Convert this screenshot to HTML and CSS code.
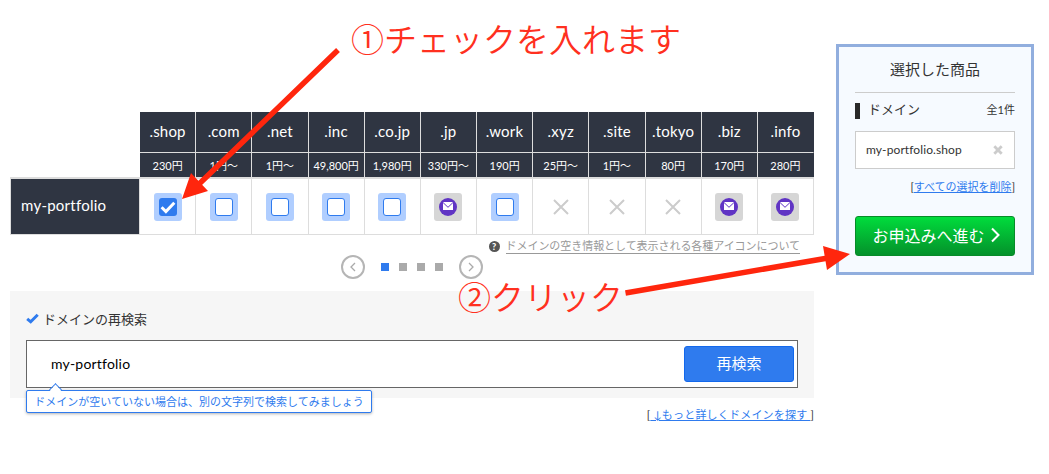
FILE: index.html
```html
<!DOCTYPE html>
<html lang="ja">
<head>
    <meta charset="UTF-8">
    <meta name="viewport" content="width=device-width, initial-scale=1.0">
    <title>ドメイン検索</title>
    <link rel="stylesheet" href="styles.css">
</head>
<body>
    <!-- アイコン -->
    <svg class="defs">
        <symbol id="mail" viewBox="0 0 18 18">
            <circle cx="9" cy="9" r="9" fill="#6034c4"/>
            <rect x="4" y="4" width="10" height="8" fill="#fff"/>
            <path d="M4 4.5l5 4.8 5-4.8" fill="none" stroke="#6034c4" stroke-width="1"/>
        </symbol>
        <symbol id="cross" viewBox="0 0 16 16">
            <path d="M1 1l14 14M15 1L1 15" fill="none" stroke="#ccc" stroke-width="2"/>
        </symbol>
    </svg>

    <div class="page">
        <main class="main">
            <div class="domains">
                <div class="blank"></div>
                <div class="tld">.shop</div>
                <div class="tld">.com</div>
                <div class="tld">.net</div>
                <div class="tld">.inc</div>
                <div class="tld">.co.jp</div>
                <div class="tld">.jp</div>
                <div class="tld">.work</div>
                <div class="tld">.xyz</div>
                <div class="tld">.site</div>
                <div class="tld">.tokyo</div>
                <div class="tld">.biz</div>
                <div class="tld">.info</div>

                <div class="blank"></div>
                <div class="price">230円</div>
                <div class="price">1円〜</div>
                <div class="price">1円〜</div>
                <div class="price">49,800円</div>
                <div class="price">1,980円</div>
                <div class="price">330円〜</div>
                <div class="price">190円</div>
                <div class="price">25円〜</div>
                <div class="price">1円〜</div>
                <div class="price">80円</div>
                <div class="price">170円</div>
                <div class="price">280円</div>

                <div class="name">my-portfolio</div>
                <div class="cell"><span class="pick"><span class="box checked"><svg viewBox="0 0 18 18"><path d="M2.6 9.3l4.3 4.2 8.4-8.7" fill="none" stroke="#fff" stroke-width="3"/></svg></span></span></div>
                <div class="cell"><span class="pick"><span class="box"></span></span></div>
                <div class="cell"><span class="pick"><span class="box"></span></span></div>
                <div class="cell"><span class="pick"><span class="box"></span></span></div>
                <div class="cell"><span class="pick"><span class="box"></span></span></div>
                <div class="cell"><span class="pick gray"><svg class="mail"><use href="#mail"/></svg></span></div>
                <div class="cell"><span class="pick"><span class="box"></span></span></div>
                <div class="cell"><svg class="cross"><use href="#cross"/></svg></div>
                <div class="cell"><svg class="cross"><use href="#cross"/></svg></div>
                <div class="cell"><svg class="cross"><use href="#cross"/></svg></div>
                <div class="cell"><span class="pick gray"><svg class="mail"><use href="#mail"/></svg></span></div>
                <div class="cell"><span class="pick gray"><svg class="mail"><use href="#mail"/></svg></span></div>
            </div>

            <div class="help">
                <span class="help-icon">?</span>
                <a class="help-link">ドメインの空き情報として表示される各種アイコンについて</a>
            </div>

            <div class="pager">
                <span class="nav"><svg viewBox="0 0 8 10"><path d="M6 1L2 5l4 4"/></svg></span>
                <div class="dots">
                    <span class="dot active"></span>
                    <span class="dot"></span>
                    <span class="dot"></span>
                    <span class="dot"></span>
                </div>
                <span class="nav"><svg viewBox="0 0 8 10"><path d="M2 1l4 4-4 4"/></svg></span>
            </div>

            <section class="research">
                <h2>
                    <svg class="tick" viewBox="0 0 13 11"><path d="M1.2 5.8l3.5 3L11.7 1.7" fill="none" stroke="#2f7bee" stroke-width="3"/></svg>
                    ドメインの再検索
                </h2>
                <div class="search">
                    <span class="search-text">my-portfolio</span>
                    <button class="search-button">再検索</button>
                    <div class="tip">ドメインが空いていない場合は、別の文字列で検索してみましょう</div>
                </div>
            </section>

            <div class="more">[<a>&nbsp;↓もっと詳しくドメインを探す&nbsp;</a>]</div>
        </main>

        <aside class="cart">
            <h2 class="cart-title">選択した商品</h2>
            <div class="cart-head">
                <span class="cart-label">ドメイン</span>
                <span class="cart-count">全1件</span>
            </div>
            <div class="cart-item">
                <span class="cart-domain">my-portfolio.shop</span>
                <svg class="remove" viewBox="0 0 10 10"><path d="M1.3 1.3l7.4 7.4M8.7 1.3L1.3 8.7" fill="none" stroke="#ccc" stroke-width="2.8"/></svg>
            </div>
            <div class="cart-clear">[<a>すべての選択を削除</a>]</div>
            <button class="apply">
                <span>お申込みへ進む</span>
                <svg viewBox="0 0 9 16"><path d="M1 1.5L7.5 8 1 14.5" fill="none" stroke="#fff" stroke-width="2"/></svg>
            </button>
        </aside>
    </div>

    <!-- 手順の注釈 -->
    <svg class="arrows" viewBox="0 0 1049 474">
        <path d="M338 50L198 185M625.5 293L828 258" stroke="#ff260d" stroke-width="5.5"/>
        <path d="M182 199l9-26 17 18zM850 254l-27-8 4 24z" fill="#ff260d"/>
    </svg>
    <p class="note note-check">①チェックを入れます</p>
    <p class="note note-click">②クリック</p>
</body>
</html>
```
FILE: styles.css
```css
* {
    box-sizing: border-box;
}

body {
    margin: 0;
    background: #fff;
    color: #333;
    font-family: Lato, "Noto Sans CJK JP", sans-serif;
    font-size: 11px;
}

h2, p {
    margin: 0;
    font-weight: 400;
}

button {
    font-family: inherit;
    padding: 0;
}

.defs {
    display: none;
}

.page {
    display: flex;
    align-items: flex-start;
    gap: 22px;
    padding: 44px 0 0 10px;
}

.main {
    width: 804px;
    padding-top: 68px;
}

/* ドメイン一覧 */
.domains {
    display: grid;
    grid-template-columns: 130px repeat(12, 1fr);
    grid-template-rows: 41px 24px 58px;
}

.tld, .price, .name, .cell {
    display: flex;
    align-items: center;
    justify-content: center;
    border-right: 1px solid #ddd;
}

.tld, .price, .name {
    background: #2f3542;
    color: #fff;
}

.tld {
    padding-bottom: 2px;
    border-bottom: 1px solid #ddd;
    font-size: 15px;
    letter-spacing: 0.2px;
}

.tld:nth-child(13), .price:nth-child(26) {
    border-right-color: #2f3542;
}

.price {
    padding-bottom: 1px;
    font-size: 11px;
    white-space: nowrap;
}

.name {
    justify-content: flex-start;
    padding: 0 0 3px 10px;
    border: 1px solid #ddd;
    border-top-width: 2px;
    font-size: 15px;
    letter-spacing: 0.25px;
}

.cell {
    border-top: 2px solid #ddd;
    border-bottom: 1px solid #ddd;
}

.pick {
    display: flex;
    align-items: center;
    justify-content: center;
    width: 28px;
    height: 28px;
    border-radius: 3px;
    background: #b0ceff;
}

.gray {
    background: #d6d6d6;
}

.box {
    display: block;
    width: 18px;
    height: 18px;
    border: 1px solid #2f7bee;
    border-radius: 3px;
    background: #fff;
}

.checked {
    border: 0;
    background: #2f7bee;
}

.checked svg {
    display: block;
}

.mail {
    width: 18px;
    height: 18px;
}

.cross {
    width: 16px;
    height: 16px;
}

/* ヘルプ */
.help {
    display: flex;
    align-items: center;
    justify-content: flex-end;
    gap: 6px;
    height: 16px;
    margin-top: 3px;
    padding-right: 14px;
    color: #999;
}

.help-icon {
    width: 11px;
    height: 11px;
    border-radius: 50%;
    background: #555;
    color: #fff;
    font-size: 9px;
    font-weight: 900;
    line-height: 11px;
    text-align: center;
}

.help-link {
    border-bottom: 1px solid #999;
    letter-spacing: -0.05px;
    line-height: 14px;
}

/* ページ送り */
.pager {
    display: flex;
    align-items: center;
    justify-content: center;
    gap: 16px;
    height: 24px;
    margin-top: 1px;
}

.nav {
    display: flex;
    align-items: center;
    justify-content: center;
    width: 24px;
    height: 24px;
    border: 2px solid #b5b5b5;
    border-radius: 50%;
}

.nav svg {
    width: 8px;
    height: 10px;
    fill: none;
    stroke: #aaa;
    stroke-width: 1.3;
}

.dots {
    display: flex;
    gap: 10px;
}

.dot {
    width: 8px;
    height: 8px;
    background: #aaa;
}

.active {
    background: #2f7bee;
}

/* 再検索 */
.research {
    height: 107px;
    margin-top: 12px;
    padding: 17px 16px 0;
    background: #f6f6f6;
}

.research h2 {
    display: flex;
    align-items: center;
    gap: 4px;
    height: 20px;
    font-size: 13px;
}

.tick {
    width: 13px;
    height: 11px;
}

.search {
    position: relative;
    display: flex;
    align-items: center;
    justify-content: space-between;
    height: 48px;
    margin-top: 12px;
    padding: 0 3px 0 24px;
    border: 1px solid #666;
    background: #fff;
}

.search-text {
    padding-bottom: 2px;
    color: #000;
    font-size: 14px;
    letter-spacing: 0.2px;
}

.search-button {
    width: 110px;
    height: 36px;
    padding-bottom: 3px;
    border: 1px solid #1268ec;
    border-radius: 3px;
    background: #2f7bee;
    color: #fff;
    font-size: 15px;
}

.tip {
    position: absolute;
    top: 49px;
    left: -1px;
    width: 346px;
    height: 23px;
    border: 1px solid #2f7bee;
    border-radius: 2px;
    background: #fff;
    box-shadow: 0 1px 3px rgba(0, 0, 0, 0.3);
    color: #2f7bee;
    line-height: 21px;
    text-align: center;
    white-space: nowrap;
}

.tip::before {
    content: "";
    position: absolute;
    top: -6px;
    left: 24px;
    width: 8px;
    height: 8px;
    border: solid #2f7bee;
    border-width: 1px 0 0 1px;
    background: linear-gradient(135deg, #fff 60%, transparent 60%);
    transform: rotate(45deg);
}

.more {
    margin-top: 9px;
    letter-spacing: 0.2px;
    line-height: 16px;
    text-align: right;
}

.more a, .cart-clear a {
    color: #2f7bee;
    text-decoration: underline;
}

/* 選択した商品 */
.cart {
    width: 198px;
    height: 231px;
    padding: 0 16px;
    border: 3px solid #91aede;
    background: #f6faff;
}

.cart-title {
    height: 46px;
    border-bottom: 1px solid #ccc;
    font-size: 15px;
    line-height: 45px;
    text-align: center;
}

.cart-head {
    display: flex;
    align-items: center;
    justify-content: space-between;
    height: 16px;
    margin-top: 10px;
    border-left: 5px solid #292929;
    line-height: 16px;
}

.cart-label {
    padding: 0 0 4px 8px;
    font-size: 13px;
}

.cart-count {
    padding-bottom: 2px;
}

.cart-item {
    display: flex;
    align-items: center;
    justify-content: space-between;
    height: 38px;
    margin-top: 12px;
    padding: 0 11px 0 10px;
    border: 1px solid #ccc;
    background: #fff;
}

.cart-domain {
    padding-bottom: 2px;
    font-size: 12px;
    letter-spacing: 0.1px;
}

.remove {
    width: 10px;
    height: 10px;
}

.cart-clear {
    height: 16px;
    margin-top: 10px;
    line-height: 16px;
    text-align: right;
}

.apply {
    display: flex;
    align-items: center;
    justify-content: center;
    gap: 6px;
    width: 160px;
    height: 40px;
    margin-top: 21px;
    padding: 0 0 2px 2px;
    border: 1px solid #078b29;
    border-radius: 3px;
    background: linear-gradient(#00dc3c, #04912b);
    color: #fff;
    font-size: 16px;
}

.apply svg {
    width: 9px;
    height: 16px;
}

/* 注釈は画面の上に重ねる */
.arrows {
    position: absolute;
    top: 0;
    left: 0;
    width: 1049px;
    height: 474px;
}

.note {
    position: absolute;
    color: #ff3020;
    font-family: "Noto Sans CJK JP", sans-serif;
    font-size: 33px;
    font-weight: 350;
    line-height: 40px;
    white-space: nowrap;
}

.note-check {
    top: 18px;
    left: 351px;
}

.note-click {
    top: 276px;
    left: 458px;
}
```
